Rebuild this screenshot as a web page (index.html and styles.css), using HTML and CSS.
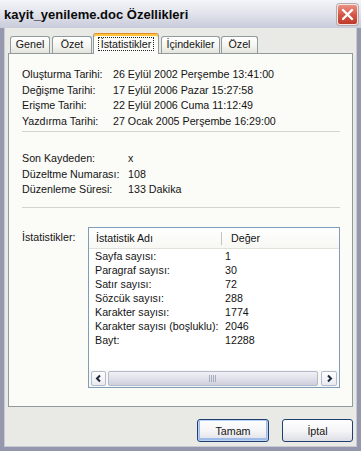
FILE: index.html
```html
<!DOCTYPE html>
<html lang="tr">
<head>
<meta charset="utf-8">
<title>kayit_yenileme.doc Özellikleri</title>
<link rel="stylesheet" href="styles.css">
</head>
<body>
<div class="window">
  <div class="titlebar">
    <span class="title">kayit_yenileme.doc Özellikleri</span>
    <span class="close">
      <svg width="13" height="13" viewBox="0 0 13 13"><path d="M2 2 L11 11 M11 2 L2 11" stroke="#fff" stroke-width="2.4" stroke-linecap="round"/></svg>
    </span>
  </div>
  <div class="frame">
    <div class="tabs">
      <div class="tab w-genel">Genel</div>
      <div class="tab w-ozet">Özet</div>
      <div class="tab active"><span class="focus">İstatistikler</span></div>
      <div class="tab w-icindekiler">İçindekiler</div>
      <div class="tab w-ozel">Özel</div>
    </div>
    <div class="panel">
      <div class="group g1">
        <div class="row"><span class="lbl">Oluşturma Tarihi:</span><span>26 Eylül 2002 Perşembe 13:41:00</span></div>
        <div class="row"><span class="lbl">Değişme Tarihi:</span><span>17 Eylül 2006 Pazar 15:27:58</span></div>
        <div class="row"><span class="lbl">Erişme Tarihi:</span><span>22 Eylül 2006 Cuma 11:12:49</span></div>
        <div class="row"><span class="lbl">Yazdırma Tarihi:</span><span>27 Ocak 2005 Perşembe 16:29:00</span></div>
      </div>
      <div class="sep sep1"></div>
      <div class="group g2">
        <div class="row"><span class="lbl">Son Kaydeden:</span><span>x</span></div>
        <div class="row"><span class="lbl">Düzeltme Numarası:</span><span>108</span></div>
        <div class="row"><span class="lbl">Düzenleme Süresi:</span><span>133 Dakika</span></div>
      </div>
      <div class="sep sep2"></div>
      <div class="stats">
        <div class="stats-label">İstatistikler:</div>
        <div class="listbox">
          <div class="lhead">
            <div class="hc1">İstatistik Adı</div>
            <div class="hc2">Değer</div>
          </div>
          <div class="lrows">
            <div class="lrow"><span class="c1">Sayfa sayısı:</span><span class="c2">1</span></div>
            <div class="lrow"><span class="c1">Paragraf sayısı:</span><span class="c2">30</span></div>
            <div class="lrow"><span class="c1">Satır sayısı:</span><span class="c2">72</span></div>
            <div class="lrow"><span class="c1">Sözcük sayısı:</span><span class="c2">288</span></div>
            <div class="lrow"><span class="c1">Karakter sayısı:</span><span class="c2">1774</span></div>
            <div class="lrow"><span class="c1">Karakter sayısı (boşluklu):</span><span class="c2">2046</span></div>
            <div class="lrow"><span class="c1">Bayt:</span><span class="c2">12288</span></div>
          </div>
          <div class="hscroll">
            <div class="sbtn sbtn-left">
              <svg width="9" height="9" viewBox="0 0 9 9"><path d="M6 1.5 L3 4.5 L6 7.5" fill="none" stroke="#1e2a3a" stroke-width="2"/></svg>
            </div>
            <div class="thumb">
              <svg width="8" height="7" viewBox="0 0 8 7"><path d="M0.5 0 V7 M2.5 0 V7 M4.5 0 V7 M6.5 0 V7" stroke="#a9adc0" stroke-width="1"/></svg>
            </div>
            <div class="sbtn sbtn-right">
              <svg width="9" height="9" viewBox="0 0 9 9"><path d="M3 1.5 L6 4.5 L3 7.5" fill="none" stroke="#1e2a3a" stroke-width="2"/></svg>
            </div>
          </div>
        </div>
      </div>
    </div>
    <div class="buttons">
      <button class="btn btn-default">Tamam</button>
      <button class="btn btn-cancel">İptal</button>
    </div>
  </div>
</div>
</body>
</html>
```

FILE: styles.css
```css
* {
  box-sizing: border-box;
}

body {
  margin: 0;
  font-family: "Liberation Sans", Arial, sans-serif;
  font-size: 10.7px;
  color: #141414;
  background: #ffffff;
}

.window {
  width: 361px;
  height: 451px;
  display: flex;
  flex-direction: column;
}

.titlebar {
  height: 28px;
  flex: none;
  display: flex;
  align-items: center;
  justify-content: space-between;
  padding: 0 3px 0 4px;
  background: linear-gradient(#f4f5f9, #e3e5ed 45%, #c8cbd9);
}

.title {
  font-weight: bold;
  font-size: 13px;
  color: #0a0a0a;
}

.close {
  width: 21px;
  height: 21px;
  border-radius: 3px;
  border: 1px solid #f3e6e4;
  box-shadow: 0 0 0 1px #b8a9ab;
  background: linear-gradient(#e99184, #d45443 55%, #bd3a2a);
  display: flex;
  align-items: center;
  justify-content: center;
}

.frame {
  flex: 1;
  display: flex;
  flex-direction: column;
  background: #e9e9e5;
  border: 4px solid #9597ad;
  border-top: none;
  box-shadow: inset 1px 0 #c8c9d5, inset -1px 0 #c8c9d5, inset 0 -1px #c8c9d5;
}

.tabs {
  height: 25px;
  flex: none;
  display: flex;
  align-items: flex-end;
  margin: 0 4px;
  padding-left: 2px;
  position: relative;
  z-index: 1;
}

.tab {
  height: 17px;
  line-height: 15px;
  text-align: center;
  border: 1px solid #919b9c;
  border-bottom: none;
  border-radius: 3px 3px 0 0;
  background: linear-gradient(#ffffff, #f3f3ef 60%, #e4e3dc);
  margin-right: 2px;
  margin-bottom: 0;
}

.w-genel { width: 40px; }
.w-ozet { width: 40px; margin-right: 1px; }
.w-icindekiler { width: 59px; margin-right: 1px; }
.w-ozel { width: 37px; }

.tab.active {
  width: 66px;
  height: 21px;
  line-height: 17px;
  margin-bottom: -1px;
  background: #fbfbf8;
  border-top: 1px solid #e68b2c;
  box-shadow: inset 0 2px 0 #ffc73c;
  padding-top: 2px;
}

.focus {
  outline: 1px dotted #222;
  outline-offset: 0;
  padding: 0 2px;
}

.panel {
  height: 354px;
  flex: none;
  margin: 0 4px;
  border: 1px solid #919b9c;
  background: #fbfbf8;
  padding: 13px 12px 0 13px;
}

.row {
  display: flex;
  white-space: nowrap;
}

.g1 .row {
  line-height: 15.5px;
}

.g1 .lbl {
  width: 91px;
}

.g2 {
  margin-top: 19px;
}

.g2 .row {
  line-height: 15.5px;
}

.g2 .lbl {
  width: 106px;
}

.sep {
  height: 1px;
  background: #d5d4cc;
}

.sep1 {
  margin-top: 2px;
}

.sep2 {
  margin-top: 9px;
}

.stats {
  margin-top: 19px;
  display: flex;
}

.stats-label {
  width: 66px;
  flex: none;
  padding-top: 3px;
  line-height: 14px;
}

.listbox {
  flex: 1;
  height: 161px;
  border: 1px solid #7f9db9;
  background: #ffffff;
  display: flex;
  flex-direction: column;
}

.lhead {
  height: 21px;
  flex: none;
  display: flex;
  line-height: 20px;
  background: linear-gradient(#ffffff, #f7f7f3);
  border-bottom: 1px solid #e3e2da;
}

.hc1 {
  width: 133px;
  padding-left: 7px;
  position: relative;
}

.hc1::after {
  content: "";
  position: absolute;
  right: 0;
  top: 4px;
  bottom: 3px;
  width: 1px;
  background: #c7c5b8;
}

.hc2 {
  padding-left: 9px;
}

.lrows {
  flex: 1;
}

.lrow {
  display: flex;
  line-height: 14px;
  white-space: nowrap;
}

.c1 {
  width: 136px;
  padding-left: 6px;
}

.hscroll {
  height: 17px;
  flex: none;
  display: flex;
  align-items: center;
  padding: 0 2px 0 2px;
  background: #f7f7f4;
}

.sbtn {
  width: 15px;
  height: 15px;
  flex: none;
  border: 1px solid #b4b9cc;
  border-radius: 2px;
  background: linear-gradient(#ffffff, #e9e9f1);
  display: flex;
  align-items: center;
  justify-content: center;
}

.sbtn-right {
  width: 16px;
}

.thumb {
  flex: 1;
  height: 15px;
  margin: 0 3px 0 2px;
  border: 1px solid #b4b8cc;
  border-radius: 2px;
  background: linear-gradient(#f1f1f6, #dcdde7 60%, #cdcfdc);
  display: flex;
  align-items: center;
  justify-content: center;
}

.buttons {
  display: flex;
  justify-content: flex-end;
  gap: 13px;
  margin-top: 12px;
  padding-right: 4px;
}

.btn {
  height: 23px;
  font-family: "Liberation Sans", Arial, sans-serif;
  font-size: 10.7px;
  color: #141414;
  border: 1px solid #1f3f72;
  border-radius: 3px;
  background: linear-gradient(#ffffff, #f4f4f6 55%, #dcdde6);
  padding: 0;
}

.btn-default {
  width: 72px;
  box-shadow: inset 0 0 0 1px #bcd0f0, inset 0 -1px 0 2px #9fbbe8;
}

.btn-cancel {
  width: 71px;
}
```
